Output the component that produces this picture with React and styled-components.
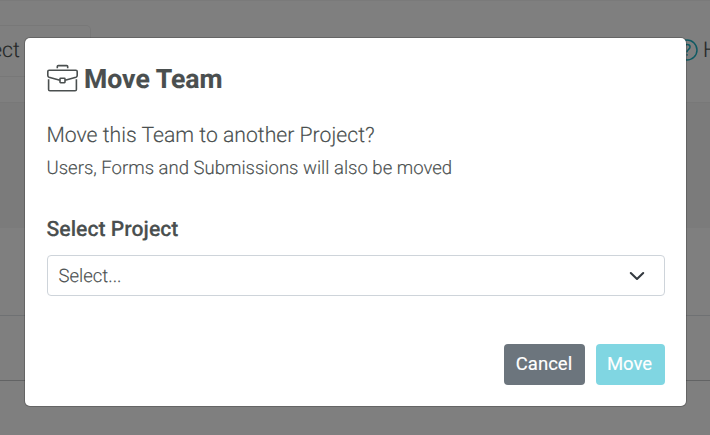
import React from "react";
import styled, { createGlobalStyle } from "styled-components";

const GlobalStyle = createGlobalStyle`
  * {
    box-sizing: border-box;
  }

  body {
    margin: 0;
    overflow: hidden;
    font-family: Roboto, "Liberation Sans", sans-serif;
    font-weight: 300;
    color: #4a4f4f;
    text-rendering: geometricPrecision;
    -webkit-text-stroke: 0.15px currentColor;
  }
`;

const Page = styled.div`
  position: relative;
  width: 710px;
  height: 435px;
  overflow: hidden;
  background: #fff;
`;

const TopBar = styled.div`
  display: flex;
  justify-content: space-between;
  height: 103px;
  padding-top: 24px;
  border-top: 1px solid #f4f4f4;
  border-bottom: 1px solid #f0f0f0;
  font-size: 21.3px;
`;

const Tab = styled.div`
  width: 91px;
  height: 52px;
  border: 1px solid #f0f0f0;
  border-left: 0;
  border-top-right-radius: 5px;
  line-height: 49px;
  text-indent: -9px;
`;

const Help = styled.div`
  display: flex;
  flex: none;
  gap: 5px;
  width: 34px;
  height: 50px;
  align-items: center;
  white-space: nowrap;
  overflow: hidden;

  svg {
    flex: none;
  }
`;

const Row = styled.div`
  height: ${(props) => props.$height}px;
  background: ${(props) => props.$background || "#fff"};
  border-bottom: 1px solid ${(props) => props.$line};
`;

const Overlay = styled.div`
  position: absolute;
  inset: 0;
  padding: 38px 24px 29px 25px;
  background: rgba(0, 0, 0, 0.5);
`;

const Modal = styled.div`
  height: 368px;
  padding: 22px 21.5px 21px;
  border-radius: 5px;
  background: #fff;
  box-shadow: 0 0 0 1px rgba(0, 0, 0, 0.2);
`;

const Title = styled.h2`
  display: flex;
  align-items: center;
  gap: 6.5px;
  height: 36px;
  margin: 0;
  font-size: 26.6px;
  font-weight: 700;

  span {
    padding-top: 2px;
  }
`;

const Question = styled.p`
  margin: 24px 0 0;
  font-size: 21.2px;
  line-height: 32px;
`;

const Note = styled.p`
  margin: 2px 0 0;
  font-size: 18.55px;
  line-height: 28px;
`;

const Label = styled.label`
  display: block;
  margin-top: 33px;
  font-size: 21.2px;
  font-weight: 500;
  line-height: 30px;
`;

const Select = styled.div`
  display: flex;
  align-items: center;
  justify-content: space-between;
  height: 41px;
  margin-top: 10px;
  padding: 0 19px 0 11px;
  border: 1px solid #ced4da;
  border-radius: 4px;
  font-size: 18.5px;
`;

const Footer = styled.div`
  display: flex;
  justify-content: flex-end;
  gap: 10.5px;
  margin-top: 48px;
`;

const Button = styled.button`
  width: ${(props) => props.$width}px;
  height: 41px;
  padding: 0 1px 1px 0;
  border: 0;
  border-radius: 4px;
  background: ${(props) => (props.$primary ? "#80d6e2" : "#6c757d")};
  color: #fff;
  font-family: inherit;
  font-size: 18.5px;
  font-weight: 400;
`;

const BriefcaseIcon = () => (
  <svg
    width="31"
    height="28"
    viewBox="0 0 31 28"
    fill="none"
    stroke="#4a4f4f"
    strokeWidth="1.6"
    strokeLinejoin="round"
  >
    <path d="M10.3 4.2V2.6q0-1 1-1h8.4q1 0 1 1v1.6" />
    <path d="M12.9 16.3 2 13.2q-1.2-.4-1.2-1.6V7.6q0-1.3 1.3-1.3h26.8q1.3 0 1.3 1.3v4q0 1.2-1.2 1.6l-10.9 3.1" />
    <path d="M1.6 15.2v10.2q0 1.3 1.3 1.3h25.2q1.3 0 1.3-1.3V15.2" />
    <rect x="13" y="14.3" width="5" height="4.4" rx=".6" />
  </svg>
);

const HelpIcon = () => (
  <svg
    width="22"
    height="22"
    viewBox="0 0 22 22"
    fill="none"
    stroke="#1fb4c6"
    strokeWidth="1.5"
    strokeLinecap="round"
  >
    <circle cx="11" cy="11" r="10" />
    <path d="M8.2 8.2q.3-2.6 3-2.6 2.9 0 2.9 2.5c0 2.3-3 2.2-3 4.6" />
    <path d="M11.1 15.7v.2" />
  </svg>
);

const ChevronIcon = () => (
  <svg
    width="16"
    height="10"
    viewBox="0 0 16 10"
    fill="none"
    stroke="#343a40"
    strokeWidth="2.1"
    strokeLinecap="round"
    strokeLinejoin="round"
  >
    <path d="M1.8 2 8 8l6.2-6" />
  </svg>
);

const App = () => {
  return (
    <Page>
      <GlobalStyle />
      <TopBar>
        <Tab>ect</Tab>
        <Help>
          <HelpIcon />
          <span>H</span>
        </Help>
      </TopBar>
      <Row $height={125} $background="#f7f7f7" $line="#f7f7f7" />
      <Row $height={88} $line="#dee2e6" />
      <Row $height={65} $line="#c4c6c8" />
      <Overlay>
        <Modal>
          <Title>
            <BriefcaseIcon />
            <span>Move Team</span>
          </Title>
          <Question>Move this Team to another Project?</Question>
          <Note>Users, Forms and Submissions will also be moved</Note>
          <Label>Select Project</Label>
          <Select>
            <span>Select...</span>
            <ChevronIcon />
          </Select>
          <Footer>
            <Button $width={81}>Cancel</Button>
            <Button $width={69} $primary>
              Move
            </Button>
          </Footer>
        </Modal>
      </Overlay>
    </Page>
  );
};

export default App;
